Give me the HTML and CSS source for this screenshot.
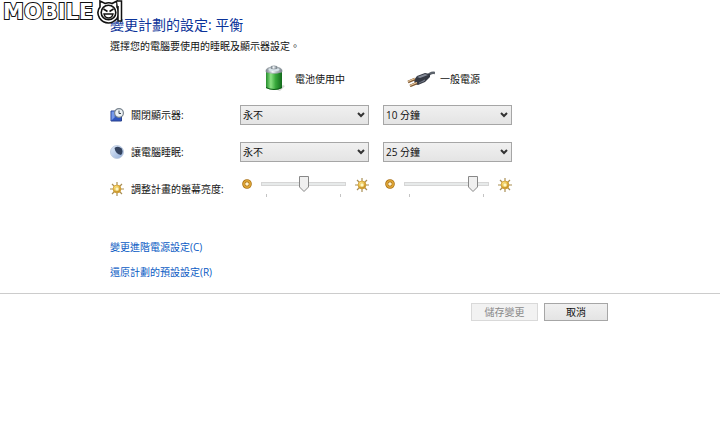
FILE: index.html
```html
<!DOCTYPE html>
<html lang="zh-Hant">
<head>
  <meta charset="UTF-8" />
  <meta name="viewport" content="width=device-width, initial-scale=1.0"/>
  <title>變更計劃的設定</title>
  <link rel="stylesheet" href="styles.css">
</head>
<body>

  <!-- Shared icons -->
  <svg class="defs" aria-hidden="true">
    <defs>
      <radialGradient id="gold" cx="40%" cy="35%">
        <stop offset="0" stop-color="#fff3a8"/>
        <stop offset="0.6" stop-color="#f4cd55"/>
        <stop offset="1" stop-color="#c9952a"/>
      </radialGradient>
      <linearGradient id="green">
        <stop offset="0" stop-color="#248c2b"/>
        <stop offset="0.3" stop-color="#8be283"/>
        <stop offset="0.6" stop-color="#37a83b"/>
        <stop offset="1" stop-color="#126b1c"/>
      </linearGradient>
      <linearGradient id="metal">
        <stop offset="0" stop-color="#77808a"/>
        <stop offset="0.4" stop-color="#f4f7fa"/>
        <stop offset="1" stop-color="#78828c"/>
      </linearGradient>
      <linearGradient id="moon" x2="1" y2="1">
        <stop offset="0" stop-color="#e4eefb"/>
        <stop offset="1" stop-color="#8fabd6"/>
      </linearGradient>
    </defs>
    <symbol id="sun" viewBox="0 0 14 14">
      <path d="M7 0v3M7 11v3M0 7h3M11 7h3M2 2l2 2M10 10l2 2M12 2l-2 2M4 10l-2 2" stroke="#a98f55" stroke-width="1.2"/>
      <circle cx="7" cy="7" r="4" fill="url(#gold)" stroke="#d0a03a" stroke-width="0.8"/>
      <circle cx="7" cy="7" r="2" fill="#fff8c4" stroke="#d9ab3a" stroke-width="0.5"/>
    </symbol>
    <symbol id="dim" viewBox="0 0 10 10">
      <circle cx="5" cy="5" r="3.3" fill="#fff3cf" stroke="#a86f12" stroke-width="3"/>
      <circle cx="5" cy="5" r="3.2" fill="none" stroke="#dfa636" stroke-width="1.6"/>
    </symbol>
  </svg>

  <div class="logo">
    <span class="logo-text">MOBILE</span>
    <svg class="logo-face" viewBox="0 0 26 24" aria-hidden="true">
      <path d="M3 7L3 1L8 3.500Q12 2 15 3.500L20 1L20 7Q24 13 20 18.500Q16 23 11.500 23Q6 23 2.500 18Q-1 12 3 7Z" fill="#fff" stroke="#111" stroke-width="1.600"/>
      <circle cx="11.500" cy="12.500" r="7.300" fill="#fff" stroke="#111" stroke-width="1.600"/>
      <path d="M6.500 9l4 2.500M16.500 9l-4 2.500" stroke="#111" stroke-width="1.500" fill="none"/>
      <path d="M7 14h9q-1 4-4.500 4t-4.500-4Z" fill="#fff" stroke="#111" stroke-width="1.300"/>
      <path d="M20 1h4.500v20h-3.500v-15" fill="#fff" stroke="#111" stroke-width="1.500"/>
    </svg>
  </div>

  <main class="plan">
    <h1>變更計劃的設定: 平衡</h1>
    <p class="intro">選擇您的電腦要使用的睡眠及顯示器設定。</p>

    <form id="planForm">
      <div class="row row-head">
        <span class="source battery">
          <svg width="20" height="27" viewBox="0 0 20 27" aria-hidden="true">
            <path d="M12 25l6-5 2 1-5 5z" fill="#d5d8d5"/>
            <path d="M1 5h16v18q-8 4-16 0z" fill="url(#green)"/>
            <path d="M1 7V5q1-3 8-3t8 3v2q-8 3-16 0z" fill="url(#metal)" stroke="#8b959b" stroke-width="0.6"/>
            <ellipse cx="9" cy="4.500" rx="5.500" ry="1.500" fill="#d9e4ea"/>
            <path d="M6 1.500q3-1.500 6 0v2q-3 1-6 0z" fill="url(#metal)" stroke="#6f7a80" stroke-width="0.5"/>
            <path d="M1 22q8 4 16 0v1q-8 4-16 0z" fill="#0f5d18"/>
          </svg>
          電池使用中
        </span>
        <span class="source plugged">
          <svg width="28" height="16" viewBox="0 0 28 16" aria-hidden="true">
            <path d="M20 6q3-5 8-4" fill="none" stroke="#5c626b" stroke-width="2.500"/>
            <path d="M7 9l3-4 8-3 5 1v3l-5 5-7 3-3-1z" fill="#353943"/>
            <path d="M10 6l8-3 3 1-8 3z" fill="#858b98"/>
            <path d="M12 12l6-3M15 11l3-2" stroke="#6f7583"/>
            <path d="M1 11l7-3M3 15l7-3" stroke="#7d5731" stroke-width="2.500"/>
            <path d="M1 10.500l7-3M3 14.500l7-3" stroke="#e8c79c" stroke-width="1.200"/>
          </svg>
          一般電源
        </span>
      </div>

      <div class="row">
        <span class="label" id="displayLabel">
          <svg width="14" height="14" viewBox="0 0 14 14" aria-hidden="true">
            <path d="M1 3h10.500v10h-10.500z" fill="#2f55bd" stroke="#2a438f"/>
            <path d="M1.500 3.500h4l-1 6-3 3z" fill="#7699ea"/>
            <circle cx="9" cy="5" r="4.400" fill="#edf2f5" stroke="#78838e" stroke-width="1.200"/>
            <path d="M9 2.500v3h2" fill="none" stroke="#3b4650"/>
          </svg>
          關閉顯示器:
        </span>
        <select aria-labelledby="displayLabel">
          <option>永不</option>
          <option>10 分鐘</option>
        </select>
        <select aria-labelledby="displayLabel">
          <option>10 分鐘</option>
          <option>永不</option>
        </select>
      </div>

      <div class="row row-sleep">
        <span class="label" id="sleepLabel">
          <svg width="14" height="14" viewBox="0 0 14 14" aria-hidden="true">
            <circle cx="7" cy="7" r="6.500" fill="url(#moon)" stroke="#b7c5da" stroke-width="0.8"/>
            <path d="M4.500 3a4.500 4.500 0 1 1 6.500 7Q5.500 9 4.500 3z" fill="#34435f"/>
          </svg>
          讓電腦睡眠:
        </span>
        <select aria-labelledby="sleepLabel">
          <option>永不</option>
          <option>25 分鐘</option>
        </select>
        <select aria-labelledby="sleepLabel">
          <option>25 分鐘</option>
          <option>永不</option>
        </select>
      </div>

      <div class="row row-brightness">
        <span class="label" id="brightLabel">
          <svg width="14" height="14" aria-hidden="true"><use href="#sun"/></svg>
          調整計畫的螢幕亮度:
        </span>
        <div class="brightness">
          <svg width="10" height="10" aria-hidden="true"><use href="#dim"/></svg>
          <div class="slider">
            <input type="range" min="0" max="100" value="50" aria-labelledby="brightLabel">
            <div class="ticks"><i></i><i></i></div>
          </div>
          <svg width="14" height="14" aria-hidden="true"><use href="#sun"/></svg>
        </div>
        <div class="brightness">
          <svg width="10" height="10" aria-hidden="true"><use href="#dim"/></svg>
          <div class="slider">
            <input type="range" min="0" max="100" value="86" aria-labelledby="brightLabel">
            <div class="ticks"><i></i><i></i></div>
          </div>
          <svg width="14" height="14" aria-hidden="true"><use href="#sun"/></svg>
        </div>
      </div>
    </form>

    <nav class="links">
      <a href="#advanced">變更進階電源設定(C)</a>
      <a href="#restore">還原計劃的預設設定(R)</a>
    </nav>
  </main>

  <footer class="actions">
    <button class="save" type="submit" form="planForm" disabled>儲存變更</button>
    <button type="button">取消</button>
  </footer>

</body>
</html>
```
FILE: styles.css
```css
* {
  box-sizing: border-box;
  margin: 0;
  padding: 0;
}

body {
  font-family: "Open Sans", "Noto Sans CJK TC", sans-serif;
  font-size: 10px;
  line-height: 16px;
  background: #fff;
  color: #111;
}

svg {
  flex: none;
}

.defs {
  position: absolute;
  width: 0;
  height: 0;
}

/* Site mark over the top left corner */
.logo {
  position: absolute;
  top: 0;
  left: 3px;
  display: flex;
  align-items: center;
  gap: 4px;
}

.logo-text {
  font-family: "DejaVu Sans", sans-serif;
  font-size: 21px;
  font-weight: bold;
  line-height: 24px;
  color: #fff;
  -webkit-text-stroke: 2px #111;
  paint-order: stroke fill;
}

.logo-face {
  width: 26px;
  height: 24px;
}

.plan {
  padding: 15px 16px 13px 110px;
}

h1 {
  font-size: 14px;
  font-weight: normal;
  line-height: 20px;
  color: #0b3399;
}

.intro {
  margin: 3px 0 11px;
}

.row {
  display: grid;
  grid-template-columns: 116px 129px 129px;
  column-gap: 14px;
  align-items: center;
  margin-bottom: 17px;
}

.row-head {
  margin-bottom: 13px;
}

.row-sleep {
  margin-bottom: 14px;
}

.source {
  display: flex;
  align-items: center;
  height: 27px;
}

.battery {
  grid-column: 2;
  gap: 10px;
  padding-left: 25px;
}

.plugged {
  gap: 5px;
  padding-left: 24px;
}

.label {
  display: flex;
  align-items: center;
  gap: 7px;
  white-space: nowrap;
}

select {
  width: 100%;
  height: 20px;
  padding: 0 20px 0 2px;
  font: inherit;
  color: #111;
  appearance: none;
  border: 1px solid #a6a6a6;
  border-radius: 0;
  background:
    url("data:image/svg+xml,%3Csvg xmlns='http://www.w3.org/2000/svg' width='8' height='6'%3E%3Cpath d='M1 1l3 3 3-3' fill='none' stroke='%23333' stroke-width='2'/%3E%3C/svg%3E") no-repeat right 3px center,
    linear-gradient(#f0f0f0, #e4e4e4);
}

/* Brightness sliders */
.row-brightness {
  align-items: end;
  margin-bottom: 42px;
}

.brightness {
  display: flex;
  align-items: flex-start;
  justify-content: space-between;
  padding-left: 2px;
}

.brightness svg {
  margin-top: 2px;
}

.brightness svg:first-child {
  margin-top: 3px;
}

.slider {
  width: 85px;
}

input[type="range"] {
  display: block;
  width: 100%;
  height: 16px;
  appearance: none;
  background: none;
}

input[type="range"]::-webkit-slider-runnable-track {
  height: 4px;
  border: 1px solid #d6d6d6;
  background: #e7eaea;
}

input[type="range"]::-webkit-slider-thumb {
  appearance: none;
  width: 10px;
  height: 16px;
  margin-top: -7px;
  background: url("data:image/svg+xml,%3Csvg xmlns='http://www.w3.org/2000/svg' width='10' height='16'%3E%3Cpath d='M.5.5h9v10.500l-4.500 4.500-4.500-4.500z' fill='%23f0f0f0' stroke='%23888'/%3E%3C/svg%3E") no-repeat;
}

.ticks {
  display: flex;
  justify-content: space-between;
  padding: 2px 5px 0;
}

.ticks i {
  width: 1px;
  height: 3px;
  background: #c4c4c4;
}

.links {
  display: flex;
  flex-direction: column;
  align-items: flex-start;
  gap: 9px;
}

a {
  color: #0a5bc4;
  text-decoration: none;
}

a:hover {
  text-decoration: underline;
}

.actions {
  display: flex;
  justify-content: flex-end;
  gap: 6px;
  padding: 9px 112px 9px 16px;
  border-top: 1px solid #ccc;
}

button {
  min-width: 64px;
  height: 18px;
  font: inherit;
  color: #111;
  border: 1px solid #a6a6a6;
  background: linear-gradient(#f0f0f0, #e4e4e4);
}

.save {
  min-width: 67px;
}

button:disabled {
  color: #8a8a8a;
  border-color: #d9d9d9;
  background: #f2f2f2;
}
```
